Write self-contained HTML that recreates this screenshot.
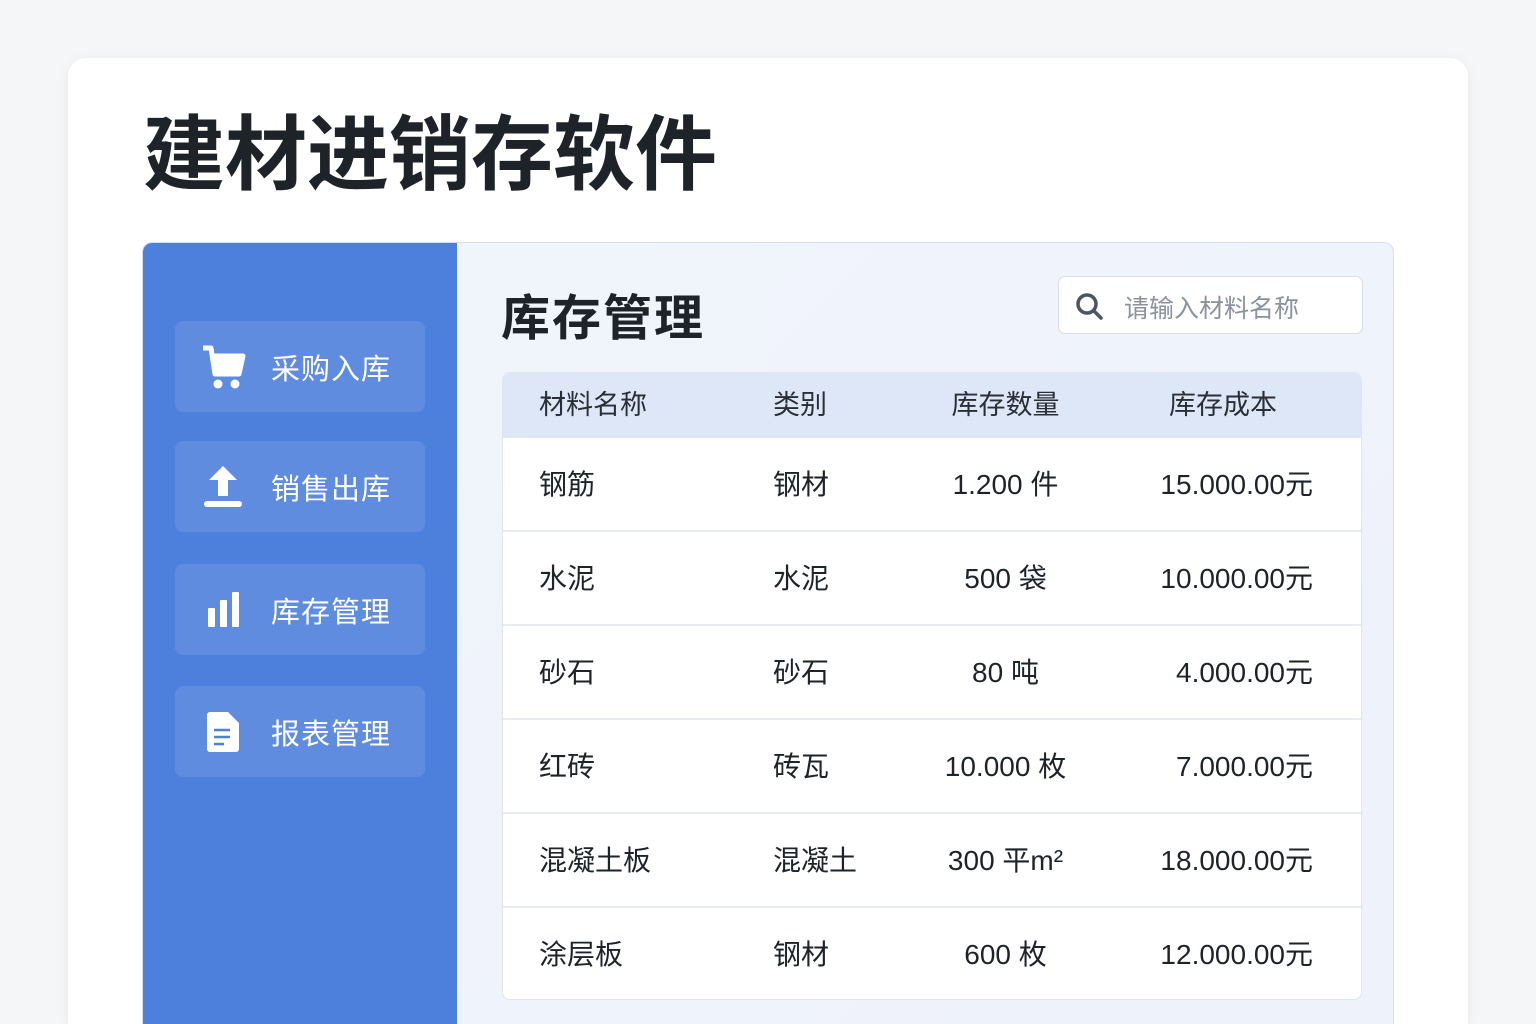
<!DOCTYPE html>
<html><head><meta charset="utf-8"><style>
*{margin:0;padding:0;box-sizing:border-box}
html,body{width:1536px;height:1024px;overflow:hidden}
body{background:#f5f6f7;font-family:"Liberation Sans","Noto Sans CJK SC",sans-serif;position:relative}
.card{position:absolute;left:68px;top:58px;width:1400px;height:966px;background:#fff;border-radius:18px 18px 0 0;box-shadow:0 2px 14px rgba(0,0,0,.05)}
h1{position:absolute;left:143px;top:106px;font-size:82px;font-weight:700;color:#1e2329;letter-spacing:0px;line-height:100px}
.panel{position:absolute;left:142px;top:242px;width:1252px;height:782px;border-radius:10px 10px 0 0;overflow:hidden;border:1px solid #d8deea;border-bottom:none;background:linear-gradient(135deg,#f1f4fb,#eef2fb)}
.side{position:absolute;left:0;top:0;width:314px;height:100%;background:#4d7fdc}
.btn{position:absolute;left:32px;width:250px;height:91px;border-radius:8px;background:rgba(255,255,255,.1);color:#fff;font-size:29px;display:flex;align-items:center}
.btn svg{position:absolute;left:26px}
.btn span{position:absolute;left:96px;letter-spacing:1px}
h2{position:absolute;left:358px;top:36px;font-size:49px;font-weight:700;color:#1e2329;letter-spacing:2px}
.search{position:absolute;left:915px;top:33px;width:305px;height:58px;background:#fff;border:1px solid #d9dee8;border-radius:7px}
.search span{position:absolute;left:65px;top:12px;font-size:25px;color:#8a929e}
.table{position:absolute;left:359px;top:129px;width:860px;height:628px;background:#fff;border-radius:8px;border:1px solid #e0e5ee;overflow:hidden}
.row{position:absolute;left:0;width:100%;height:94px;border-bottom:2px solid #e8ebf0;font-size:28px;color:#1e2329}
.row div{position:absolute;top:0;line-height:94px}
.hd{height:65px;background:#dde7f8;border:none;font-size:27px;color:#2a2f36}
.hd div{line-height:65px}
.c1{left:36px}.c2{left:270px}.c3{left:400px;width:205px;text-align:center}.c4{left:620px;width:190px;text-align:right}
</style></head><body>
<div class="card"></div>
<h1>建材进销存软件</h1>
<div class="panel">
<div class="side">
 <div class="btn" style="top:78px"><svg width="48" height="46" viewBox="0 0 48 46"><path d="M2 4h8l4 26h24l4-18H12" fill="none" stroke="#fff" stroke-width="5" stroke-linejoin="round"/><path d="M12 12h30l-4 18H14z" fill="#fff"/><circle cx="17" cy="40" r="4.5" fill="#fff"/><circle cx="34" cy="40" r="4.5" fill="#fff"/></svg><span>采购入库</span></div>
 <div class="btn" style="top:198px"><svg width="44" height="46" viewBox="0 0 44 46"><path d="M22 2L8 16h9v16h10V16h9z" fill="#fff"/><rect x="3" y="37" width="38" height="6" rx="3" fill="#fff"/></svg><span>销售出库</span></div>
 <div class="btn" style="top:321px"><svg width="44" height="46" viewBox="0 0 44 46"><rect x="7" y="21" width="7" height="19" rx="1" fill="#fff"/><rect x="19" y="13" width="7" height="27" rx="1" fill="#fff"/><rect x="31" y="5" width="7" height="35" rx="1" fill="#fff"/></svg><span>库存管理</span></div>
 <div class="btn" style="top:443px"><svg width="44" height="46" viewBox="0 0 44 46"><path d="M6 6a3 3 0 0 1 3-3h18l11 11v26a3 3 0 0 1-3 3H9a3 3 0 0 1-3-3z" fill="#fff"/><path d="M13 21h16M13 28h16M13 35h10" stroke="#4d7fdc" stroke-width="2.5"/></svg><span>报表管理</span></div>
</div>
<h2>库存管理</h2>
<div class="search"><svg style="position:absolute;left:16px;top:15px" width="30" height="30" viewBox="0 0 30 30"><circle cx="12" cy="12" r="9" fill="none" stroke="#4b5563" stroke-width="3.5"/><path d="M19 19l7 7" stroke="#4b5563" stroke-width="3.5" stroke-linecap="round"/></svg><span>请输入材料名称</span></div>
<div class="table">
 <div class="row hd" style="top:0"><div class="c1">材料名称</div><div class="c2">类别</div><div class="c3">库存数量</div><div class="c4" style="text-align:center;left:650px;width:140px">库存成本</div></div>
 <div class="row" style="top:65px"><div class="c1">钢筋</div><div class="c2">钢材</div><div class="c3">1.200 件</div><div class="c4">15.000.00元</div></div>
 <div class="row" style="top:159px"><div class="c1">水泥</div><div class="c2">水泥</div><div class="c3">500 袋</div><div class="c4">10.000.00元</div></div>
 <div class="row" style="top:253px"><div class="c1">砂石</div><div class="c2">砂石</div><div class="c3">80 吨</div><div class="c4">4.000.00元</div></div>
 <div class="row" style="top:347px"><div class="c1">红砖</div><div class="c2">砖瓦</div><div class="c3">10.000 枚</div><div class="c4">7.000.00元</div></div>
 <div class="row" style="top:441px"><div class="c1">混凝土板</div><div class="c2">混凝土</div><div class="c3">300 平m²</div><div class="c4">18.000.00元</div></div>
 <div class="row" style="top:535px;border:none"><div class="c1">涂层板</div><div class="c2">钢材</div><div class="c3">600 枚</div><div class="c4">12.000.00元</div></div>
</div>
</div>
</body></html>
